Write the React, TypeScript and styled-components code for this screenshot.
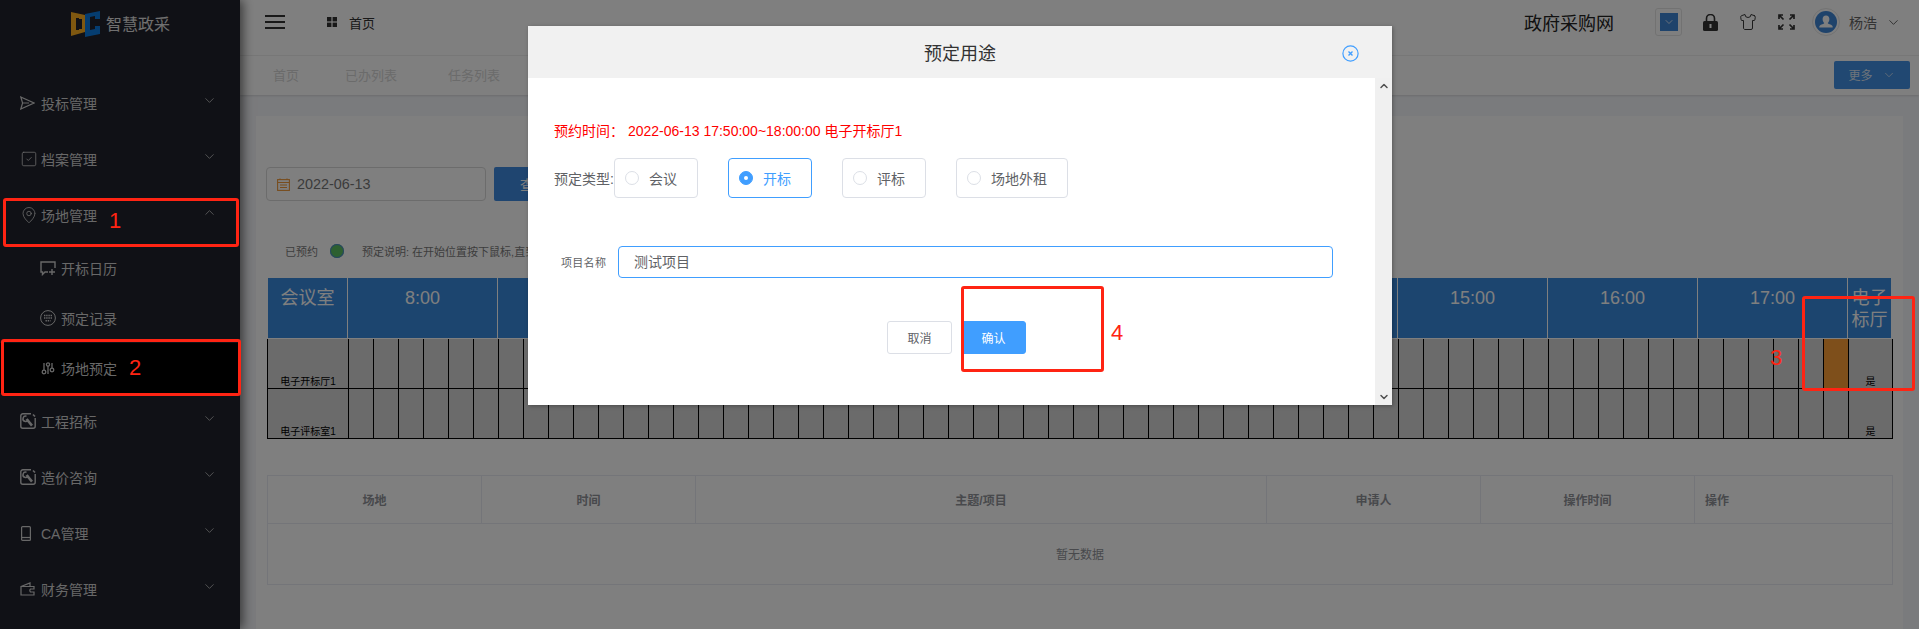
import React from 'react';
import styled, { createGlobalStyle } from 'styled-components';
import { ChevronDown, ChevronUp, MapPin, Shirt, SquareCheck } from 'lucide-react';

const FONT = '"Liberation Sans", "Noto Sans CJK SC", sans-serif';

const GlobalStyle = createGlobalStyle`
  html, body {
    margin: 0;
    height: 100%;
    overflow: hidden;
    font-family: ${FONT};
  }
  * {
    box-sizing: border-box;
  }
`;

const Page = styled.div`
  position: relative;
  display: flex;
  width: 1919px;
  height: 629px;
  overflow: hidden;
  background: #f5f6fa;
`;

const Sidebar = styled.aside`
  position: relative;
  z-index: 1;
  flex: 0 0 240px;
  background: #20222c;
  box-shadow: 3px 0 10px rgba(0, 0, 0, 0.55);
`;

const Logo = styled.div`
  display: flex;
  align-items: center;
  gap: 6px;
  height: 46px;
  padding-left: 71px;
  font-size: 16px;
  color: #e0e0e0;
`;

const Menu = styled.nav`
  margin-top: 29px;
`;

const MenuItem = styled.div`
  display: flex;
  align-items: center;
  height: 56px;
  padding: 0 23px 0 21px;
  font-size: 14px;
  color: #d0d0d0;
`;

const MenuIcon = styled.span`
  display: flex;
  width: 20px;
  margin-left: -1px;
  margin-right: 1px;
`;

const MenuLabel = styled.span`
  flex: 1;
`;

const MenuArrow = styled.span`
  display: flex;
  margin-bottom: 6px;
`;

const SubItem = styled.div<{ $active?: boolean }>`
  display: flex;
  align-items: center;
  gap: 5px;
  height: 50px;
  padding-left: 40px;
  font-size: 14px;
  color: #d0d0d0;
  background: ${(p) => (p.$active ? '#000' : 'transparent')};
`;

const Main = styled.main`
  flex: 1;
  display: flex;
  flex-direction: column;
  min-width: 0;
`;

const TopBar = styled.header`
  display: flex;
  align-items: center;
  flex: 0 0 56px;
  padding: 0 18px 11px 25px;
  background: #fff;
  border-bottom: 1px solid #f0f0f0;
`;

const Burger = styled.span`
  width: 20px;
  height: 14px;
  margin-right: 42px;
  border-top: 2px solid #333;
  border-bottom: 2px solid #333;
  position: relative;
  &::after {
    content: '';
    position: absolute;
    left: 0;
    right: 0;
    top: 4px;
    height: 2px;
    background: #333;
  }
`;

const Crumb = styled.span`
  display: flex;
  align-items: center;
  gap: 12px;
  font-size: 13px;
  color: #333;
`;

const TopRight = styled.div`
  display: flex;
  align-items: center;
  margin-left: auto;
  color: #333;
`;

const SiteName = styled.span`
  font-size: 18px;
  color: #222;
  margin-right: 41px;
`;

const SelectBox = styled.span`
  display: flex;
  align-items: center;
  justify-content: center;
  width: 27px;
  height: 28px;
  margin-right: 21px;
  border: 1px solid #e4e4e4;
  border-radius: 3px;
`;

const SelectInner = styled.span`
  display: flex;
  align-items: center;
  justify-content: center;
  width: 18px;
  height: 18px;
  background: #3f86d6;
  color: #fff;
`;

const ToolIcon = styled.span`
  display: flex;
  margin-right: 21px;
`;

const AvatarRing = styled.span`
  display: flex;
  align-items: center;
  justify-content: center;
  width: 28px;
  height: 28px;
  margin: 0 9px 0 -4px;
  border: 1px solid #e6e6e6;
  border-radius: 50%;
`;

const UserName = styled.span`
  font-size: 14px;
  color: #666;
  margin-right: 9px;
`;

const TabBar = styled.div`
  display: flex;
  align-items: center;
  flex: 0 0 39px;
  padding: 0 9px 2px 33px;
  background: #fff;
  box-shadow: 0 1px 2px rgba(0, 0, 0, 0.12);
`;

const Tab = styled.span<{ $w: number }>`
  width: ${(p) => p.$w}px;
  font-size: 13px;
  color: #d6d6d6;
`;

const MoreButton = styled.span`
  display: flex;
  align-items: center;
  justify-content: center;
  gap: 9px;
  width: 76px;
  height: 28px;
  margin-left: auto;
  border-radius: 2px;
  background: #4290e4;
  color: #dfe9f5;
  font-size: 12px;
`;

const Content = styled.div`
  flex: 1;
  padding: 21px 16px 0 16px;
`;

const Card = styled.section`
  height: 100%;
  padding: 51px 10px 0 11px;
  background: #fff;
`;

const Filters = styled.div`
  display: flex;
  gap: 8px;
  margin-left: -1px;
`;

const DateBox = styled.div`
  display: flex;
  align-items: center;
  gap: 7px;
  width: 220px;
  height: 34px;
  padding-left: 10px;
  border: 1px solid #d8d8d8;
  border-radius: 4px;
  font-size: 14.4px;
  color: #777;
`;

const QueryButton = styled.span`
  display: flex;
  align-items: center;
  justify-content: center;
  width: 80px;
  height: 34px;
  border-radius: 2px;
  background: #3f8ae0;
  color: #fff;
  font-size: 14px;
`;

const Legend = styled.div`
  display: flex;
  align-items: center;
  height: 20px;
  margin-top: 40px;
  margin-bottom: 17px;
  padding-left: 18px;
  font-size: 11px;
  color: #7a7a7a;
`;

const LegendDot = styled.span`
  width: 14px;
  height: 14px;
  margin: 0 18px 0 12px;
  border-radius: 50%;
  background: #5ac060;
  box-shadow: inset 0 0 0 1px #4d8bc9;
`;

const Schedule = styled.div`
  width: 1626px;
`;

const ScheduleHead = styled.div`
  display: flex;
  height: 61px;
  padding-left: 1px;
`;

const HeadCell = styled.div<{ $w: number }>`
  flex: 0 0 ${(p) => p.$w}px;
  padding-top: 9px;
  border-right: 1px solid #fff;
  border-bottom: 1px solid #fff;
  background: #388ade;
  color: #fff;
  font-size: 18px;
  line-height: 22px;
  text-align: center;
  &:last-child {
    border-right: 0;
  }
`;

const ScheduleRow = styled.div`
  display: flex;
  height: 50px;
  border-bottom: 1px solid #000;
  background: #d6d6d6;
`;

const SlotCell = styled.div<{ $taken?: boolean }>`
  flex: 0 0 25px;
  border-left: 1px solid #000;
  background: ${(p) => (p.$taken ? '#fd9f36' : 'transparent')};
`;

const RoomCell = styled.div`
  display: flex;
  align-items: flex-end;
  justify-content: center;
  flex: 0 0 81px;
  border-left: 1px solid #000;
  color: #000;
  font-size: 10px;
  line-height: 12px;
`;

const FlagCell = styled.div`
  display: flex;
  align-items: flex-end;
  justify-content: center;
  flex: 0 0 45px;
  border-left: 1px solid #000;
  border-right: 1px solid #000;
  color: #000;
  font-size: 10px;
  line-height: 12px;
`;

const Records = styled.div`
  width: 1626px;
  margin-top: 36px;
  border: 1px solid #e8ebf2;
`;

const RecordsHead = styled.div`
  display: grid;
  grid-template-columns: 214px 214px 571px 214px 214px 1fr;
  height: 48px;
  border-bottom: 1px solid #e8ebf2;
`;

const RecordsTitle = styled.div<{ $left?: boolean }>`
  display: flex;
  align-items: center;
  justify-content: ${(p) => (p.$left ? 'flex-start' : 'center')};
  padding-left: ${(p) => (p.$left ? '10px' : '0')};
  border-right: 1px solid #e8ebf2;
  font-size: 12px;
  font-weight: 700;
  color: #909399;
  &:last-child {
    border-right: 0;
  }
`;

const RecordsEmpty = styled.div`
  display: flex;
  align-items: center;
  justify-content: center;
  height: 60px;
  padding-bottom: 2px;
  font-size: 12px;
  color: #909399;
`;

const Overlay = styled.div`
  position: absolute;
  inset: 0;
  z-index: 2;
  background: rgba(0, 0, 0, 0.5);
`;

const Modal = styled.div`
  position: absolute;
  z-index: 3;
  left: 528px;
  top: 26px;
  display: flex;
  flex-direction: column;
  width: 864px;
  height: 379px;
  background: #fff;
  box-shadow: 1px 1px 4px rgba(0, 0, 0, 0.3);
`;

const ModalHead = styled.div`
  position: relative;
  display: flex;
  align-items: center;
  justify-content: center;
  flex: 0 0 52px;
  background: #f1f1f1;
  font-size: 18px;
  color: #333;
`;

const ModalClose = styled.span`
  position: absolute;
  right: 33px;
  top: 19px;
  display: flex;
`;

const ModalBody = styled.div`
  flex: 1;
  display: flex;
  min-height: 0;
`;

const ModalForm = styled.div`
  flex: 1;
  padding: 43px 0 0 26px;
`;

const ModalScroll = styled.div`
  display: flex;
  flex-direction: column;
  align-items: center;
  justify-content: space-between;
  flex: 0 0 17px;
  padding: 2px 0;
  background: #f0f0f0;
  color: #505050;
`;

const BookedTime = styled.div`
  font-size: 14px;
  line-height: 20px;
  color: #f00;
`;

const TypeRow = styled.div`
  display: flex;
  align-items: center;
  margin-top: 17px;
`;

const TypeLabel = styled.span`
  flex: 0 0 60px;
  font-size: 14px;
  white-space: nowrap;
  color: #606266;
`;

const TypeOptions = styled.div`
  display: flex;
  gap: 30px;
`;

const RadioBox = styled.label<{ $on?: boolean; $w: number }>`
  display: flex;
  align-items: center;
  gap: 10px;
  width: ${(p) => p.$w}px;
  height: 40px;
  padding-left: 10px;
  border: 1px solid ${(p) => (p.$on ? '#409eff' : '#dcdfe6')};
  border-radius: 4px;
  font-size: 14px;
  color: ${(p) => (p.$on ? '#409eff' : '#606266')};
`;

const RadioMark = styled.span<{ $on?: boolean }>`
  display: flex;
  align-items: center;
  justify-content: center;
  width: 14px;
  height: 14px;
  border: 1px solid ${(p) => (p.$on ? '#409eff' : '#dcdfe6')};
  border-radius: 50%;
  background: ${(p) => (p.$on ? '#409eff' : '#fff')};
  &::after {
    content: '';
    width: 4px;
    height: 4px;
    border-radius: 50%;
    background: #fff;
  }
`;

const NameRow = styled.div`
  display: flex;
  align-items: center;
  margin: 48px 0 0 7px;
`;

const NameLabel = styled.span`
  flex: 0 0 57px;
  font-size: 11px;
  letter-spacing: 0.3px;
  color: #606266;
`;

const NameInput = styled.div`
  display: flex;
  align-items: center;
  width: 715px;
  height: 32px;
  padding: 0 0 2px 15px;
  border: 1px solid #409eff;
  border-radius: 4px;
  font-size: 14px;
  color: #606266;
`;

const Actions = styled.div`
  display: flex;
  gap: 9px;
  margin: 43px 0 0 333px;
`;

const ActionButton = styled.span<{ $primary?: boolean }>`
  display: flex;
  align-items: center;
  justify-content: center;
  width: 65px;
  height: 33px;
  border: 1px solid ${(p) => (p.$primary ? '#409eff' : '#dcdfe6')};
  border-radius: 3px;
  background: ${(p) => (p.$primary ? '#409eff' : '#fff')};
  color: ${(p) => (p.$primary ? '#fff' : '#606266')};
  font-size: 12px;
`;

const MarkBox = styled.div<{ $x: number; $y: number; $w: number; $h: number }>`
  position: absolute;
  z-index: 4;
  left: ${(p) => p.$x}px;
  top: ${(p) => p.$y}px;
  width: ${(p) => p.$w}px;
  height: ${(p) => p.$h}px;
  border: 3px solid #ff2413;
  border-radius: 3px;
`;

const MarkNumber = styled.span<{ $x: number; $y: number }>`
  position: absolute;
  z-index: 4;
  left: ${(p) => p.$x}px;
  top: ${(p) => p.$y}px;
  font-size: 22px;
  line-height: 22px;
  color: #ff2413;
`;

const stroke = { fill: 'none', stroke: 'currentColor', strokeWidth: 1.2 };

const LogoMark = () => (
  <svg width="29" height="27" viewBox="0 0 29 27">
    <path d="M0 2 14 5V9H8V19H14V22L0 26Z M5 8V20H8V8Z" fill="#ffb020" fillRule="evenodd" />
    <path d="M14 5 H8 V9 H11 V19 H8 V22 H14Z" fill="#ffb020" />
    <path d="M14 4 29 1V9H24V6L19 7V20L24 19V16H29V24L14 27Z" fill="#0a7ae0" />
  </svg>
);

const SendIcon = () => (
  <svg width="15" height="14" viewBox="0 0 15 14" {...stroke}>
    <path d="M.8 1 14 7 .8 13 2.6 7Z M2.6 7H9" />
  </svg>
);

const ChatPlusIcon = () => (
  <svg width="16" height="15" viewBox="0 0 16 15" {...stroke} strokeWidth={1.4}>
    <path d="M8 11H5L2.5 13.5V11H1V1H15V7" />
    <path d="M12 8V14M9 11H15" />
  </svg>
);

const KeyboardIcon = () => (
  <svg width="16" height="16" viewBox="0 0 16 16" {...stroke} strokeWidth={1}>
    <circle cx="8" cy="8" r="7.4" />
    <path d="M4 5.5H12M4 8H12M5.5 10.8H10.5" strokeWidth={1.4} strokeDasharray="1.4 .8" />
  </svg>
);

const SlidersIcon = () => (
  <svg width="16" height="13" viewBox="-1.5 0 16 13" {...stroke} strokeWidth={1.3}>
    <path d="M2.5 1V8M6.5 4V12M10.5 1V6" />
    <circle cx="2.5" cy="10" r="1.8" />
    <circle cx="6.5" cy="2.5" r="1.6" />
    <circle cx="10.5" cy="8" r="1.8" />
  </svg>
);

const ToolBoxIcon = () => (
  <svg width="16" height="16" viewBox="0 0 16 16" {...stroke} strokeWidth={1.4}>
    <path d="M11 .8H2.8a2 2 0 0 0-2 2V13.2a2 2 0 0 0 2 2H13.2a2 2 0 0 0 2-2V5" />
    <path d="M6.5 3.2A2.7 2.7 0 1 0 8.2 6.8" strokeWidth={1.5} />
    <path d="M6.6 6 12 12.6" strokeWidth={2.6} />
    <path d="M13 1.5 15 3.5" strokeWidth={1.6} />
  </svg>
);

const PhoneIcon = () => (
  <svg width="12" height="15" viewBox="0 0 12 15" {...stroke}>
    <rect x="1.6" y=".6" width="8.8" height="13.8" rx="1" />
    <path d="M1.6 11.5H10.4" />
  </svg>
);

const WalletIcon = () => (
  <svg width="15" height="14" viewBox="0 0 15 14" {...stroke}>
    <path d="M1 4.5 10 1V4M1 4.5H14V7H10.5A2 2 0 0 0 10.5 10H14V13H1Z" />
  </svg>
);

const GridIcon = () => (
  <svg width="10" height="10" viewBox="0 0 10 10" fill="#333">
    <rect width="4.4" height="4.4" />
    <rect x="5.6" width="4.4" height="4.4" />
    <rect y="5.6" width="4.4" height="4.4" />
    <rect x="5.6" y="5.6" width="4.4" height="4.4" />
  </svg>
);

const LockIcon = () => (
  <svg width="15" height="17" viewBox="0 0 15 17">
    <path d="M3.5 7V4.5a4 4 0 0 1 8 0V7" fill="none" stroke="#333" strokeWidth="1.6" />
    <rect y="7" width="15" height="10" rx="1.5" fill="#333" />
    <rect x="6.5" y="10" width="2" height="4" fill="#fff" />
  </svg>
);

const ExpandIcon = () => (
  <svg width="17" height="16" viewBox="0 0 17 16" fill="none" stroke="#333" strokeWidth="1.7">
    <path d="M1 5V1H5M1 1 5.5 5.5M16 5V1H12M16 1 11.5 5.5M1 11V15H5M1 15 5.5 10.5M16 11V15H12M16 15 11.5 10.5" />
  </svg>
);

const AvatarIcon = () => (
  <svg width="22" height="22" viewBox="0 0 22 22">
    <circle cx="11" cy="11" r="11" fill="#3f86d6" />
    <path d="M11 4.5c2.2 0 3.4 1.6 3.4 3.6 0 2-1 3.4-1.7 4 .2 1 3.4 1.5 4.6 2.6.4.4.4 1.3.4 1.8H4.3c0-.5 0-1.4.4-1.8 1.2-1.1 4.4-1.6 4.6-2.6-.7-.6-1.7-2-1.7-4 0-2 1.2-3.6 3.4-3.6Z" fill="#fff" />
  </svg>
);

const CalendarIcon = () => (
  <svg width="13" height="13" viewBox="0 0 13 13" fill="none" stroke="#f09a3c" strokeWidth="1.1">
    <rect x=".6" y="1.6" width="11.8" height="10.8" />
    <path d="M.6 4.5H12.4M3 .4V2M10 .4V2M3 7H10M3 9.5H10" />
  </svg>
);

const CloseIcon = () => (
  <svg width="17" height="17" viewBox="0 0 17 17" fill="none" stroke="#409eff">
    <circle cx="8.5" cy="8.5" r="7.6" strokeWidth="1.2" />
    <path d="M6.5 6.5 10.5 10.5M10.5 6.5 6.5 10.5" strokeWidth="1.4" />
  </svg>
);

const arrowDown = <ChevronDown size={15} strokeWidth={1.2} />;
const slots = Array.from({ length: 60 }, (_, i) => i);
const hours = ['8:00', '9:00', '10:00', '11:00', '12:00', '13:00', '14:00', '15:00', '16:00', '17:00'];

const App = () => (
  <Page>
    <GlobalStyle />
    <Sidebar>
      <Logo>
        <LogoMark />
        智慧政采
      </Logo>
      <Menu>
        <MenuItem>
          <MenuIcon><SendIcon /></MenuIcon>
          <MenuLabel>投标管理</MenuLabel>
          <MenuArrow>{arrowDown}</MenuArrow>
        </MenuItem>
        <MenuItem>
          <MenuIcon><SquareCheck size={18} strokeWidth={1.1} /></MenuIcon>
          <MenuLabel>档案管理</MenuLabel>
          <MenuArrow>{arrowDown}</MenuArrow>
        </MenuItem>
        <MenuItem>
          <MenuIcon><MapPin size={18} strokeWidth={1.1} /></MenuIcon>
          <MenuLabel>场地管理</MenuLabel>
          <MenuArrow><ChevronUp size={15} strokeWidth={1.2} /></MenuArrow>
        </MenuItem>
        <SubItem>
          <ChatPlusIcon />
          开标日历
        </SubItem>
        <SubItem>
          <KeyboardIcon />
          预定记录
        </SubItem>
        <SubItem $active>
          <SlidersIcon />
          场地预定
        </SubItem>
        <MenuItem>
          <MenuIcon><ToolBoxIcon /></MenuIcon>
          <MenuLabel>工程招标</MenuLabel>
          <MenuArrow>{arrowDown}</MenuArrow>
        </MenuItem>
        <MenuItem>
          <MenuIcon><ToolBoxIcon /></MenuIcon>
          <MenuLabel>造价咨询</MenuLabel>
          <MenuArrow>{arrowDown}</MenuArrow>
        </MenuItem>
        <MenuItem>
          <MenuIcon><PhoneIcon /></MenuIcon>
          <MenuLabel>CA管理</MenuLabel>
          <MenuArrow>{arrowDown}</MenuArrow>
        </MenuItem>
        <MenuItem>
          <MenuIcon><WalletIcon /></MenuIcon>
          <MenuLabel>财务管理</MenuLabel>
          <MenuArrow>{arrowDown}</MenuArrow>
        </MenuItem>
      </Menu>
    </Sidebar>

    <Main>
      <TopBar>
        <Burger />
        <Crumb>
          <GridIcon />
          首页
        </Crumb>
        <TopRight>
          <SiteName>政府采购网</SiteName>
          <SelectBox>
            <SelectInner><ChevronDown size={12} strokeWidth={1.5} /></SelectInner>
          </SelectBox>
          <ToolIcon><LockIcon /></ToolIcon>
          <ToolIcon><Shirt size={18} strokeWidth={1.3} /></ToolIcon>
          <ToolIcon><ExpandIcon /></ToolIcon>
          <AvatarRing><AvatarIcon /></AvatarRing>
          <UserName>杨浩</UserName>
          <ChevronDown size={15} strokeWidth={1.2} />
        </TopRight>
      </TopBar>
      <TabBar>
        <Tab $w={72}>首页</Tab>
        <Tab $w={103}>已办列表</Tab>
        <Tab $w={100}>任务列表</Tab>
        <MoreButton>
          更多
          <ChevronDown size={14} strokeWidth={1.3} />
        </MoreButton>
      </TabBar>
      <Content>
        <Card>
          <Filters>
            <DateBox>
              <CalendarIcon />
              2022-06-13
            </DateBox>
            <QueryButton>查询</QueryButton>
          </Filters>
          <Legend>
            已预约
            <LegendDot />
            预定说明: 在开始位置按下鼠标,直到结束位置松开鼠标
          </Legend>
          <Schedule>
            <ScheduleHead>
              <HeadCell $w={80}>会议室</HeadCell>
              {hours.map((h) => (
                <HeadCell key={h} $w={150}>{h}</HeadCell>
              ))}
              <HeadCell $w={43}>电子标厅</HeadCell>
            </ScheduleHead>
            <ScheduleRow>
              <RoomCell>电子开标厅1</RoomCell>
              {slots.map((i) => (
                <SlotCell key={i} $taken={i === 59} />
              ))}
              <FlagCell>是</FlagCell>
            </ScheduleRow>
            <ScheduleRow>
              <RoomCell>电子评标室1</RoomCell>
              {slots.map((i) => (
                <SlotCell key={i} />
              ))}
              <FlagCell>是</FlagCell>
            </ScheduleRow>
          </Schedule>
          <Records>
            <RecordsHead>
              <RecordsTitle>场地</RecordsTitle>
              <RecordsTitle>时间</RecordsTitle>
              <RecordsTitle>主题/项目</RecordsTitle>
              <RecordsTitle>申请人</RecordsTitle>
              <RecordsTitle>操作时间</RecordsTitle>
              <RecordsTitle $left>操作</RecordsTitle>
            </RecordsHead>
            <RecordsEmpty>暂无数据</RecordsEmpty>
          </Records>
        </Card>
      </Content>
    </Main>

    <Overlay />

    <Modal>
      <ModalHead>
        预定用途
        <ModalClose><CloseIcon /></ModalClose>
      </ModalHead>
      <ModalBody>
        <ModalForm>
          <BookedTime>预约时间： 2022-06-13 17:50:00~18:00:00 电子开标厅1</BookedTime>
          <TypeRow>
            <TypeLabel>预定类型:</TypeLabel>
            <TypeOptions>
              <RadioBox $w={84}><RadioMark />会议</RadioBox>
              <RadioBox $w={84} $on><RadioMark $on />开标</RadioBox>
              <RadioBox $w={84}><RadioMark />评标</RadioBox>
              <RadioBox $w={112}><RadioMark />场地外租</RadioBox>
            </TypeOptions>
          </TypeRow>
          <NameRow>
            <NameLabel>项目名称</NameLabel>
            <NameInput>测试项目</NameInput>
          </NameRow>
          <Actions>
            <ActionButton>取消</ActionButton>
            <ActionButton $primary>确认</ActionButton>
          </Actions>
        </ModalForm>
        <ModalScroll>
          <ChevronUp size={12} strokeWidth={3} />
          <ChevronDown size={12} strokeWidth={3} />
        </ModalScroll>
      </ModalBody>
    </Modal>

    <MarkBox $x={3} $y={198} $w={236} $h={49} />
    <MarkNumber $x={109} $y={210}>1</MarkNumber>
    <MarkBox $x={1} $y={339} $w={240} $h={57} />
    <MarkNumber $x={129} $y={357}>2</MarkNumber>
    <MarkBox $x={1802} $y={296} $w={113} $h={95} />
    <MarkNumber $x={1770} $y={347}>3</MarkNumber>
    <MarkBox $x={961} $y={286} $w={143} $h={86} />
    <MarkNumber $x={1111} $y={322}>4</MarkNumber>
  </Page>
);

export default App;
